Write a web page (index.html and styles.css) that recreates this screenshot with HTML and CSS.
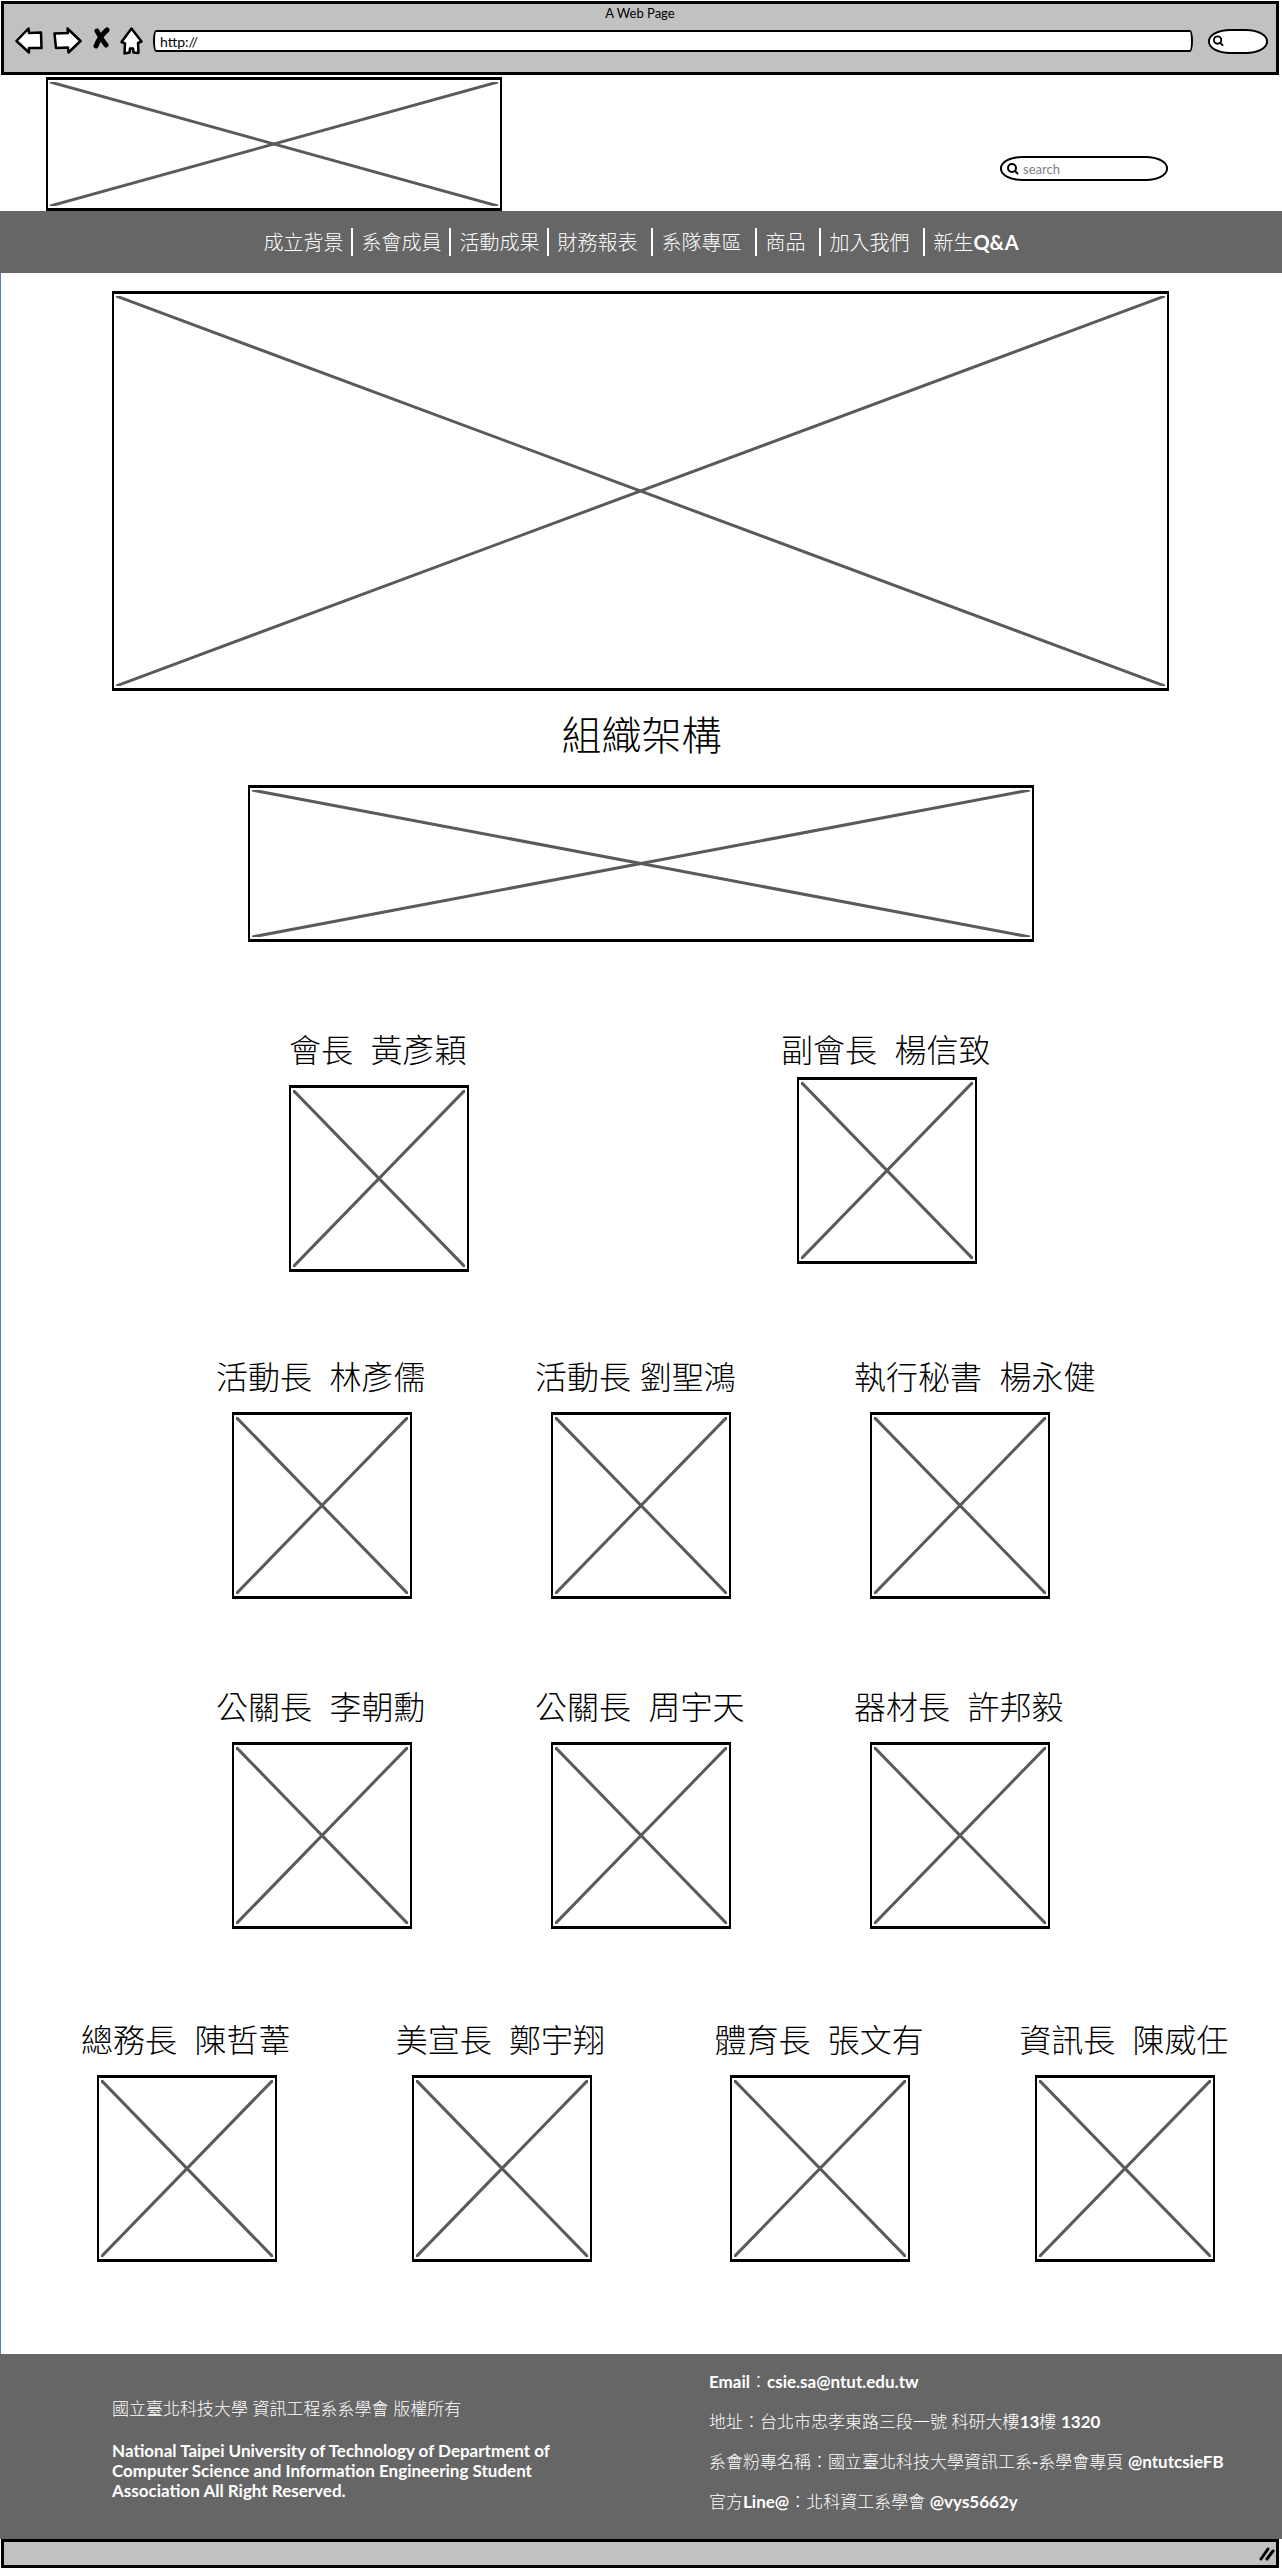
FILE: index.html
```html
<!DOCTYPE html>
<html lang="zh-Hant">
<head>
<meta charset="utf-8">
<meta name="viewport" content="width=device-width, initial-scale=1">
<title>A Web Page</title>
<link rel="stylesheet" href="styles.css">
</head>
<body>
<svg class="defs" aria-hidden="true">
  <symbol id="magnifier" viewBox="0 0 12 12"><circle cx="5" cy="5" r="4"/><path d="M7.500 7.500 11 11"/></symbol>
  <symbol id="cross"><line x1="0" y1="0" x2="100%" y2="100%"/><line x1="100%" y1="0" x2="0" y2="100%"/></symbol>
</svg>

<div class="browser">
  <div class="browser-title">A Web Page</div>
  <div class="toolbar">
    <div class="tools">
      <button type="button" aria-label="Back"><svg width="28" height="27" viewBox="0 0 28 27"><path d="M1.500 14 13.500 1.500 14 6 26 5.500 26.500 21 14 21 14 25.500Z"/></svg></button>
      <button type="button" aria-label="Forward"><svg width="29" height="27" viewBox="0 0 29 27"><path d="M1.500 6.500 15 6 14.500 1.500 27.500 14 15.500 25.500 15 20.500 3 21Z"/></svg></button>
      <button type="button" aria-label="Stop"><svg class="stop" width="18" height="27" viewBox="0 0 18 27"><path d="M5 4Q9 12 14 18M15 3Q8 9 4 19"/></svg></button>
      <button type="button" aria-label="Home"><svg width="23" height="28" viewBox="0 0 23 28"><path d="M11.500 1.500 21.500 14.500 18 16 18.500 26 13.500 25.500 13 21.500 10 21.500 9.500 25.500 4.500 26.500 5 16.500 1.500 15Z"/></svg></button>
    </div>
    <input class="address" type="text" value="http://" aria-label="Address">
    <label class="pill pill-small"><svg class="glass" width="11" height="12"><use href="#magnifier"/></svg><input type="search" aria-label="Web search"></label>
  </div>
</div>

<header class="header">
  <div class="frame logo"><svg><use href="#cross"/></svg></div>
  <label class="pill"><svg class="glass" width="12" height="12"><use href="#magnifier"/></svg><input type="search" placeholder="search" aria-label="search"></label>
</header>

<nav class="nav">
  <a href="#">成立背景</a>
  <a href="#">系會成員</a>
  <a href="#">活動成果</a>
  <a href="#" class="wide">財務報表</a>
  <a href="#" class="wide">系隊專區</a>
  <a href="#" class="wide">商品</a>
  <a href="#" class="wide">加入我們</a>
  <a href="#">新生<b>Q&amp;A</b></a>
</nav>

<main class="main">
  <div class="frame hero"><svg><use href="#cross"/></svg></div>
  <h1>組織架構</h1>
  <div class="frame chart"><svg><use href="#cross"/></svg></div>

  <section class="row heads">
    <figure class="flush"><figcaption>會長&nbsp; 黃彥穎</figcaption><div class="frame"><svg><use href="#cross"/></svg></div></figure>
    <figure class="tight"><figcaption>副會長&nbsp; 楊信致</figcaption><div class="frame"><svg><use href="#cross"/></svg></div></figure>
  </section>
  <section class="row trio">
    <figure><figcaption>活動長&nbsp; 林彥儒</figcaption><div class="frame"><svg><use href="#cross"/></svg></div></figure>
    <figure><figcaption>活動長 劉聖鴻</figcaption><div class="frame"><svg><use href="#cross"/></svg></div></figure>
    <figure><figcaption>執行秘書&nbsp; 楊永健</figcaption><div class="frame"><svg><use href="#cross"/></svg></div></figure>
  </section>
  <section class="row trio">
    <figure><figcaption>公關長&nbsp; 李朝勳</figcaption><div class="frame"><svg><use href="#cross"/></svg></div></figure>
    <figure><figcaption>公關長&nbsp; 周宇天</figcaption><div class="frame"><svg><use href="#cross"/></svg></div></figure>
    <figure><figcaption>器材長&nbsp; 許邦毅</figcaption><div class="frame"><svg><use href="#cross"/></svg></div></figure>
  </section>
  <section class="row quartet">
    <figure><figcaption>總務長&nbsp; 陳哲葦</figcaption><div class="frame"><svg><use href="#cross"/></svg></div></figure>
    <figure><figcaption>美宣長&nbsp; 鄭宇翔</figcaption><div class="frame"><svg><use href="#cross"/></svg></div></figure>
    <figure><figcaption>體育長&nbsp; 張文有</figcaption><div class="frame"><svg><use href="#cross"/></svg></div></figure>
    <figure><figcaption>資訊長&nbsp; 陳威任</figcaption><div class="frame"><svg><use href="#cross"/></svg></div></figure>
  </section>
</main>

<footer class="footer">
  <div class="rights">
    <p>國立臺北科技大學 資訊工程系系學會 版權所有</p>
    <p><b>National Taipei University of Technology of Department of<br>Computer Science and Information Engineering Student<br>Association All Right Reserved.</b></p>
  </div>
  <div class="contact">
    <p><b>Email</b>：<b>csie.sa@ntut.edu.tw</b></p>
    <p>地址：台北市忠孝東路三段一號 科研大樓<b>13</b>樓 <b>1320</b></p>
    <p>系會粉專名稱：國立臺北科技大學資訊工系<b>-</b>系學會專頁 <b>@ntutcsieFB</b></p>
    <p>官方<b>Line@</b>：北科資工系學會 <b>@vys5662y</b></p>
  </div>
</footer>
<div class="status"><svg width="18" height="16" viewBox="0 0 18 16"><path d="M3 13 10 3M9 13 15 5"/></svg></div>
</body>
</html>
```
FILE: styles.css
```css
* { box-sizing: border-box; }

body {
  margin: 0;
  min-height: 100vh;
  display: flex;
  flex-direction: column;
  background: #fff;
  color: #000;
  font-family: Lato, "Noto Sans CJK TC", sans-serif;
  font-weight: 300;
}

p, h1, figure { margin: 0; }
figure { min-width: 0; }
button, input { font: inherit; color: inherit; background: none; border: 0; padding: 0; }
input { min-width: 0; outline: 0; }
.defs { position: absolute; width: 0; height: 0; }

/* Browser chrome */
.browser {
  height: 74px;
  margin: 1px 3px 0 1px;
  border: 3px solid #000;
  background: #c1c1c1;
}
.browser-title {
  height: 20px;
  font-size: 13px;
  font-weight: 400;
  line-height: 18px;
  text-align: center;
}
.toolbar {
  display: flex;
  align-items: center;
  height: 34px;
  padding: 0 8px 0 11px;
}
.tools { display: flex; gap: 10px; width: 138px; }
.tools button { display: flex; }
.tools svg { fill: #fff; stroke: #000; stroke-width: 2.500; stroke-linejoin: round; }
.tools .stop { fill: none; stroke-width: 5; stroke-linecap: round; }
.address {
  flex: 1;
  height: 22px;
  margin-right: 15px;
  padding: 0 5px;
  border: 2px solid #000;
  border-radius: 3px / 11px;
  background: #fff;
  font-size: 14px;
  font-weight: 400;
}

.pill {
  display: flex;
  align-items: center;
  gap: 4px;
  width: 168px;
  height: 25px;
  padding: 0 5px;
  border: 2px solid #000;
  border-radius: 22px / 12px;
  background: #fff;
  font-size: 13px;
  font-weight: 400;
}
.pill input { flex: 1; width: 0; }
.pill input::placeholder { color: #808088; opacity: 1; }
.pill-small { width: 60px; padding: 0 3px; }
.glass { fill: none; stroke: #000; stroke-width: 2; }

/* Wireframe picture */
.frame { padding: 2px; border: 2px solid #000; border-width: 3px 2px; }
.frame svg {
  display: block;
  width: 100%;
  height: 100%;
  stroke: #5a5a5a;
  stroke-width: 3;
}

.header {
  display: flex;
  justify-content: space-between;
  align-items: flex-start;
  height: 136px;
  padding: 2px 114px 0 46px;
}
.logo { width: 456px; height: 134px; }
.header .pill { margin-top: 79px; }

.nav {
  display: flex;
  justify-content: center;
  align-items: center;
  height: 62px;
  background: #666;
  color: #fff;
  font-size: 20px;
  line-height: 28px;
}
.nav a {
  padding: 0 8px;
  border-right: 2px solid #fff;
  color: inherit;
  text-decoration: none;
}
.nav .wide { padding-right: 14px; }
.nav a:last-child { border: 0; }
b { font-weight: 700; }

.main {
  flex: 1;
  padding-top: 18px;
  border-left: 1px solid #5c7ba5;
}
.hero { height: 400px; margin: 0 113px 0 111px; }
.main h1 {
  margin: 16px 0 22px;
  font-size: 40px;
  font-weight: 300;
  line-height: 56px;
  text-align: center;
}
.chart { height: 157px; margin: 0 248px 0 247px; }

.row { display: grid; margin-top: 88px; }
.row figcaption {
  font-size: 32px;
  line-height: 40px;
  white-space: nowrap;
}
.row .frame { width: 180px; height: 187px; margin: 15px 0 0 16px; }
.row .flush .frame { margin-left: 0; }
.row .tight .frame { margin-top: 7px; }
.heads { grid-template-columns: 492fr 212fr; padding: 0 289px 0 288px; }
.trio { grid-template-columns: 319fr 319fr 212fr; padding: 0 216px 0 215px; }
.heads + .trio { margin-top: 85px; }
.quartet {
  grid-template-columns: 315fr 319fr 305fr 212fr;
  margin-top: 91px;
  padding: 0 51px 0 80px;
}

.footer {
  display: grid;
  grid-template-columns: 597fr 573fr;
  height: 185px;
  padding: 8px 0 0 112px;
  background: #666;
  color: #fff;
  font-size: 17px;
  line-height: 20px;
}
.rights { display: flex; flex-direction: column; gap: 22px; padding-top: 37px; }
.contact p { line-height: 40px; white-space: nowrap; }

.status {
  display: flex;
  justify-content: flex-end;
  align-items: center;
  height: 29px;
  margin: 0 3px 1px 1px;
  border: 3px solid #000;
  background: #c1c1c1;
}
.status svg { fill: none; stroke: #000; stroke-width: 3; stroke-linecap: round; }
```
